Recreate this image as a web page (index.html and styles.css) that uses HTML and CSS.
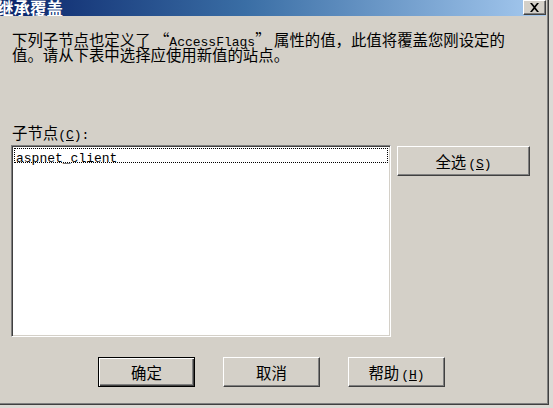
FILE: index.html
```html
<!DOCTYPE html>
<html lang="zh-CN">
<head>
<meta charset="utf-8">
<title>继承覆盖</title>
<link rel="stylesheet" href="styles.css">
</head>
<body>
<div class="window">
  <div class="frame">
    <div class="titlebar">
      <span class="title">继承覆盖</span>
      <span class="close">
        <svg width="11" height="9" viewBox="0 0 11 9"><path d="M1 0h2l2.5 3 2.5-3h2l-3.5 4.5 3.5 4.5h-2l-2.5-3-2.5 3h-2l3.5-4.5z" fill="#000"/></svg>
      </span>
    </div>
    <div class="content">
      <p class="desc"><span class="line">下列子节点也定义了 “<span class="mono">AccessFlags</span>” 属性的值，此值将覆盖您刚设定的</span><span class="line">值。请从下表中选择应使用新值的站点。</span></p>
      <div class="label">子节点<span class="mono">(<u>C</u>):</span></div>
      <div class="row">
        <div class="listbox">
          <div class="item"><span class="mono">aspnet_client</span></div>
        </div>
        <button class="btn side">全选<span class="mono acc">(<u>S</u>)</span></button>
      </div>
      <div class="buttons">
        <button class="btn default">确定</button>
        <button class="btn">取消</button>
        <button class="btn">帮助<span class="mono acc">(<u>H</u>)</span></button>
      </div>
    </div>
  </div>
</div>
</body>
</html>
```
FILE: styles.css
```css
html, body {
  margin: 0;
  padding: 0;
}
body {
  background: #dcdad5;
  width: 553px;
  height: 408px;
  overflow: hidden;
  font-family: "Noto Sans CJK SC", "Liberation Sans", sans-serif;
  font-size: 15.4px;
  color: #000;
}
.window {
  width: 549px;
  height: 405px;
  box-sizing: border-box;
  border-right: 1px solid #404040;
  border-bottom: 1px solid #404040;
}
.frame {
  height: 100%;
  box-sizing: border-box;
  border-right: 1px solid #808080;
  border-bottom: 1px solid #808080;
  background: #d4d0c8;
  padding-right: 1px;
}
.titlebar {
  height: 16px;
  background: linear-gradient(to right, #0a246a 0%, #3a6ea5 45%, #a6caf0 100%);
  display: flex;
  align-items: center;
  justify-content: space-between;
  overflow: hidden;
}
.title {
  color: #fff;
  font-weight: bold;
  font-size: 16.5px;
  line-height: 16px;
  margin-left: -3px;
  margin-top: -1px;
}
.close {
  width: 23px;
  height: 15px;
  box-sizing: border-box;
  background: #d4d0c8;
  border-top: 1px solid #fff;
  border-left: 1px solid #fff;
  border-right: 1px solid #404040;
  border-bottom: 1px solid #404040;
  box-shadow: inset -1px -1px 0 #808080;
  display: flex;
  align-items: center;
  justify-content: center;
  align-self: flex-start;
}
.content {
  padding-left: 11px;
}
.mono {
  font-family: "Liberation Mono", "DejaVu Sans Mono", monospace;
  font-size: 13px;
  line-height: 1;
}
.desc {
  margin: 16px 0 0 1px;
  display: flex;
  flex-direction: column;
}
.line {
  display: block;
  height: 15px;
  line-height: 15px;
  white-space: nowrap;
}
.label {
  margin-top: 63px;
  margin-left: 1px;
  height: 15px;
  line-height: 15px;
}
.row {
  display: flex;
  align-items: flex-start;
  margin-top: 5px;
}
.listbox {
  width: 380px;
  height: 192px;
  box-sizing: border-box;
  background: #fff;
  border-top: 1px solid #808080;
  border-left: 1px solid #808080;
  border-right: 1px solid #fff;
  border-bottom: 1px solid #fff;
  box-shadow: inset 1px 1px 0 #404040, inset -1px -1px 0 #d4d0c8;
  padding: 3px 3px 0 3px;
}
.item {
  height: 13px;
  line-height: 13px;
  outline: 1px dotted #000;
  padding-left: 1px;
}
.btn {
  font-family: "Noto Sans CJK SC", "Liberation Sans", sans-serif;
  font-size: 15.4px;
  color: #000;
  background: #d4d0c8;
  width: 97px;
  height: 30px;
  box-sizing: border-box;
  padding: 0;
  border-top: 1px solid #fff;
  border-left: 1px solid #fff;
  border-right: 1px solid #404040;
  border-bottom: 1px solid #404040;
  box-shadow: inset -1px -1px 0 #808080;
  line-height: 26px;
}
.acc {
  margin-left: 2px;
}
.side {
  width: 133px;
  margin-left: 6px;
  margin-top: 1px;
}
.buttons {
  display: flex;
  gap: 28px;
  margin-top: 20px;
  margin-left: 87px;
}
.default {
  border: 1px solid #000;
  box-shadow: inset 1px 1px 0 #fff, inset -1px -1px 0 #404040, inset -2px -2px 0 #808080;
}
```
